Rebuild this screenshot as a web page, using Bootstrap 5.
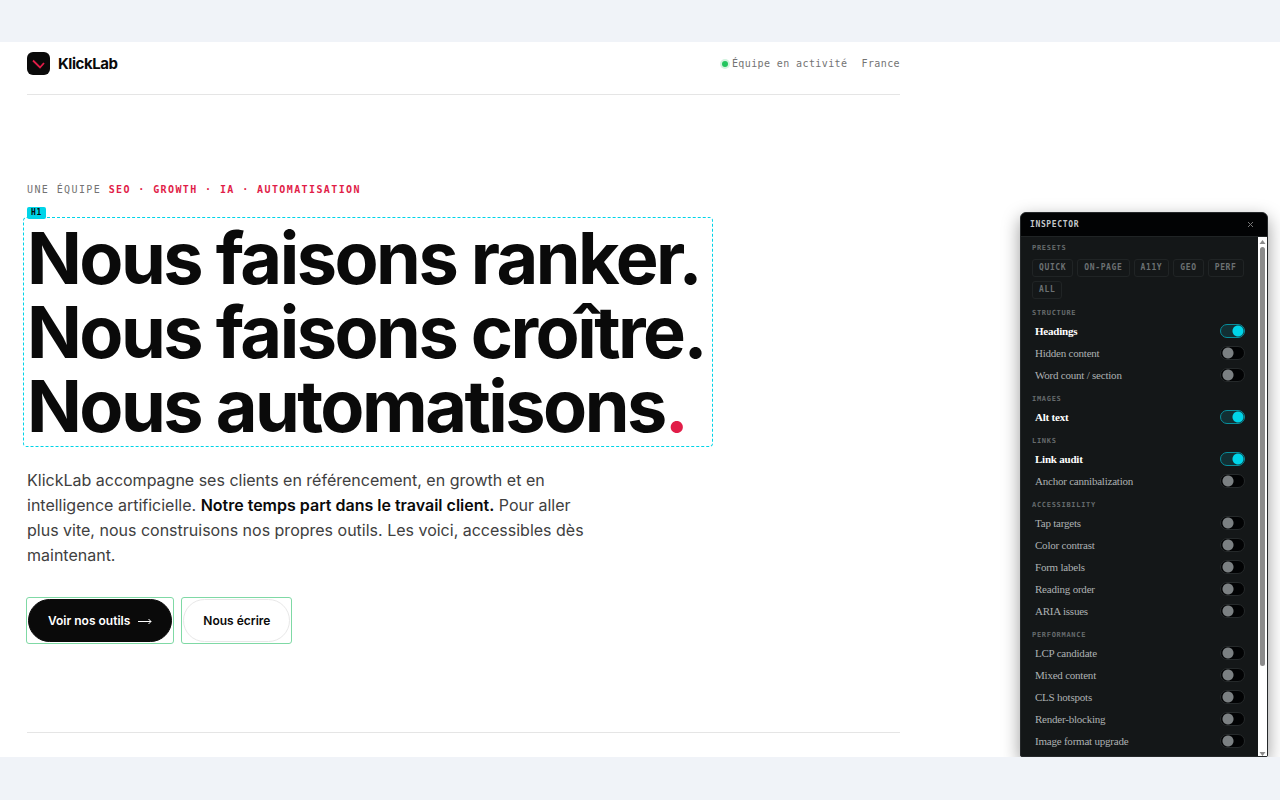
<!DOCTYPE html>
<html lang="fr">
<head>
<meta charset="utf-8">
<meta name="viewport" content="width=device-width, initial-scale=1">
<title>KlickLab</title>
<link href="https://cdn.jsdelivr.net/npm/bootstrap@5.3.0/dist/css/bootstrap.min.css" rel="stylesheet">
<style>
:root{--ink:#0a0a0a;--accent:#e11d48;--cyan:#00d4e8;--mono:"DejaVu Sans Mono","Liberation Mono",monospace}
body{background:#f0f3f8;font-family:Inter,"Liberation Sans",sans-serif;color:var(--ink);padding:42px 0 43px}
.stage{background:#fff}
.site{max-width:900px;padding-left:27px}
.rule-b{border-bottom:1px solid #e5e5e5}
.site-head{padding:10px 0 19px}
.brand{font-size:15px;line-height:23px;font-weight:700;letter-spacing:-.03em;color:var(--ink);gap:8px}
.status{font-family:var(--mono);font-size:10px;line-height:16px;letter-spacing:.04em;color:#737373;gap:14px}
.live-dot{width:6px;height:6px;border-radius:50%;background:#22c55e;box-shadow:0 0 0 2px #d3f3df}
.hero{padding:87px 0 88px}
.eyebrow{font-family:var(--mono);font-size:10px;line-height:16px;letter-spacing:.14em;color:#737373;margin-bottom:19px}
.eyebrow strong{color:var(--accent)}
.audit-h{border:1px dashed var(--cyan);border-radius:4px;padding:3px;margin:0 0 21px -4px;width:fit-content}
.audit-h h1{font-size:72px;line-height:74px;font-weight:700;letter-spacing:-.035em;padding-right:4px}
.h-tag{top:-11px;left:3px;background:var(--cyan);border-radius:2px;font:bold 8px/12px var(--mono);padding:0 4px;letter-spacing:.07em}
.lede{font-size:16px;line-height:25px;color:#404040;max-width:570px;margin-bottom:29px}
.lede strong{font-weight:600;color:var(--ink)}
.audit-link{border:1px solid #7fd9a5;border-radius:3px;padding:1px}
.pill{font-size:12px;line-height:19px;font-weight:600;border-radius:30px;padding:11px 19px;border:1px solid #e8e8e8;color:var(--ink)}
.pill-dark,.pill-dark:hover{background:var(--ink);border-color:var(--ink);color:#fff}
.inspector{top:170px;right:12px;bottom:0;width:248px;background:#141718;border:1px solid #25282a;border-radius:6px 6px 2px 2px;box-shadow:0 6px 18px rgba(0,0,0,.4)}
.insp-head{background:#020304;border-bottom:1px solid #202425;border-radius:5px 5px 0 0;padding:0 13px 0 9px;height:24px;flex:none}
.insp-title{font:bold 8px/23px var(--mono);letter-spacing:.08em;color:#c4c8ca}
.insp-close{border:0;background:none;color:#777;padding:0;line-height:0}
.insp-body{padding:4px 10px 0 11px;min-width:0}
.group-label{font:bold 7px/14px var(--mono);letter-spacing:.1em;color:#666b6d;margin:0}
.grp{margin-bottom:6px}
.chips{gap:4px;padding:4px 0 7px}
.chip{font:bold 8px/16px var(--mono);letter-spacing:.08em;color:#6c7173;background:none;border:1px solid #202425;border-radius:3px;padding:0 6px}
.opt{height:22px;padding:0 3px}
.opt label{font:11px/22px "Liberation Serif",serif;letter-spacing:-.02em;color:#adb1b2}
.opt.is-on label{color:#fff;font-weight:bold}
.toggle{appearance:none;margin:0;width:25px;height:14px;border:1px solid #25292a;border-radius:7px;background:radial-gradient(circle at 7px 6px,#7b8082 5px,transparent 6px) #020304}
.toggle:checked{border-color:#078d9b;background:radial-gradient(circle at 17px 6px,var(--cyan) 5px,transparent 6px) #122f33}
.sbar{width:9px;background:#fff;flex:none}
.thumb{width:5px;flex:0 1 419px;background:#8b8b8b;border-radius:3px}
</style>
</head>
<body class="d-flex flex-column min-vh-100">
<div class="stage flex-grow-1 position-relative overflow-hidden">
 <div class="site">
  <header class="site-head rule-b d-flex justify-content-between align-items-center">
   <a href="#" class="brand d-flex align-items-center text-decoration-none">
    <svg width="23" height="23" viewBox="0 0 23 23" aria-hidden="true"><rect width="23" height="23" rx="6" fill="#0a0a0a"/><path d="M6 8.500 13 15.500 17 11" fill="none" stroke="#e11d48" stroke-width="1.800"/></svg>KlickLab</a>
   <div class="status d-flex"><span class="d-flex align-items-center gap-1"><span class="live-dot"></span><span>Équipe en activité</span></span><span>France</span></div>
  </header>
  <main>
   <section class="hero rule-b">
    <p class="eyebrow">UNE ÉQUIPE <strong>SEO · GROWTH · IA · AUTOMATISATION</strong></p>
    <div class="audit-h position-relative">
     <span class="h-tag position-absolute">H1</span>
     <h1 class="m-0">Nous faisons ranker.<br>Nous faisons croître.<br>Nous automatisons<span style="color:var(--accent)">.</span></h1>
    </div>
    <p class="lede">KlickLab accompagne ses clients en référencement, en growth et en intelligence artificielle. <strong>Notre temps part dans le travail client.</strong> Pour aller plus vite, nous construisons nos propres outils. Les voici, accessibles dès maintenant.</p>
    <div class="d-flex" style="gap:7px;margin-left:-1px">
     <div class="audit-link"><a href="#outils" class="pill pill-dark d-flex align-items-center gap-2 text-decoration-none">Voir nos outils <svg width="14" height="8" viewBox="0 0 14 8" fill="none" stroke="currentColor" aria-hidden="true"><path d="M0 4.500H13M10.500 2 13 4.500 10.500 7"/></svg></a></div>
     <div class="audit-link"><a href="#contact" class="pill d-block text-decoration-none">Nous écrire</a></div>
    </div>
   </section>
  </main>
 </div>
 <aside class="inspector position-absolute d-flex flex-column">
  <div class="insp-head d-flex justify-content-between align-items-center"><span class="insp-title">INSPECTOR</span>
   <button class="insp-close" aria-label="Fermer"><svg width="7" height="7" viewBox="0 0 7 7" stroke="currentColor" aria-hidden="true"><path d="M1 1 6 6M6 1 1 6"/></svg></button></div>
  <div class="d-flex flex-grow-1 overflow-hidden">
   <div class="insp-body flex-grow-1">
    <div class="group-label">PRESETS</div>
    <div class="chips d-flex flex-wrap"><button class="chip">QUICK</button><button class="chip">ON-PAGE</button><button class="chip">A11Y</button><button class="chip">GEO</button><button class="chip">PERF</button><button class="chip">ALL</button></div>
    <div class="grp"><div class="group-label">STRUCTURE</div>
     <div class="opt is-on d-flex justify-content-between align-items-center"><label for="o1">Headings</label><input class="toggle" type="checkbox" id="o1" checked></div>
     <div class="opt d-flex justify-content-between align-items-center"><label for="o2">Hidden content</label><input class="toggle" type="checkbox" id="o2"></div>
     <div class="opt d-flex justify-content-between align-items-center"><label for="o3">Word count / section</label><input class="toggle" type="checkbox" id="o3"></div></div>
    <div class="grp"><div class="group-label">IMAGES</div>
     <div class="opt is-on d-flex justify-content-between align-items-center"><label for="o4">Alt text</label><input class="toggle" type="checkbox" id="o4" checked></div></div>
    <div class="grp"><div class="group-label">LINKS</div>
     <div class="opt is-on d-flex justify-content-between align-items-center"><label for="o5">Link audit</label><input class="toggle" type="checkbox" id="o5" checked></div>
     <div class="opt d-flex justify-content-between align-items-center"><label for="o6">Anchor cannibalization</label><input class="toggle" type="checkbox" id="o6"></div></div>
    <div class="grp"><div class="group-label">ACCESSIBILITY</div>
     <div class="opt d-flex justify-content-between align-items-center"><label for="o7">Tap targets</label><input class="toggle" type="checkbox" id="o7"></div>
     <div class="opt d-flex justify-content-between align-items-center"><label for="o8">Color contrast</label><input class="toggle" type="checkbox" id="o8"></div>
     <div class="opt d-flex justify-content-between align-items-center"><label for="o9">Form labels</label><input class="toggle" type="checkbox" id="o9"></div>
     <div class="opt d-flex justify-content-between align-items-center"><label for="o10">Reading order</label><input class="toggle" type="checkbox" id="o10"></div>
     <div class="opt d-flex justify-content-between align-items-center"><label for="o11">ARIA issues</label><input class="toggle" type="checkbox" id="o11"></div></div>
    <div><div class="group-label">PERFORMANCE</div>
     <div class="opt d-flex justify-content-between align-items-center"><label for="o12">LCP candidate</label><input class="toggle" type="checkbox" id="o12"></div>
     <div class="opt d-flex justify-content-between align-items-center"><label for="o13">Mixed content</label><input class="toggle" type="checkbox" id="o13"></div>
     <div class="opt d-flex justify-content-between align-items-center"><label for="o14">CLS hotspots</label><input class="toggle" type="checkbox" id="o14"></div>
     <div class="opt d-flex justify-content-between align-items-center"><label for="o15">Render-blocking</label><input class="toggle" type="checkbox" id="o15"></div>
     <div class="opt d-flex justify-content-between align-items-center"><label for="o16">Image format upgrade</label><input class="toggle" type="checkbox" id="o16"></div></div>
   </div>
   <div class="sbar d-flex flex-column align-items-center" aria-hidden="true">
    <svg width="7" height="10" viewBox="0 0 7 10" class="flex-shrink-0"><path d="M.5 7 3.500 3 6.500 7Z" fill="#8b8b8b"/></svg>
    <div class="thumb"></div>
    <svg width="7" height="5" viewBox="0 0 7 5" class="mt-auto flex-shrink-0"><path d="M.5 1 3.500 5 6.500 1Z" fill="#8b8b8b"/></svg>
   </div>
  </div>
 </aside>
</div>
<script src="https://cdn.jsdelivr.net/npm/bootstrap@5.3.0/dist/js/bootstrap.bundle.min.js"></script>
</body>
</html>
